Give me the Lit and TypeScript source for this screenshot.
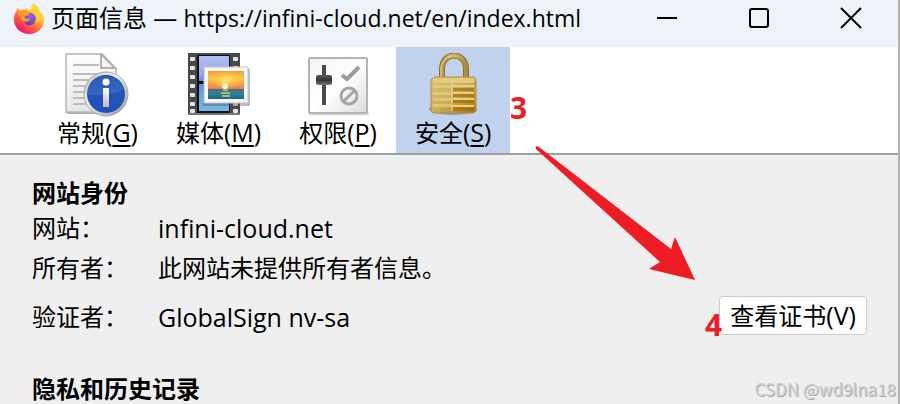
import { LitElement, html, css, svg } from "lit";
import { customElement, state } from "lit/decorators.js";
import { classMap } from "lit/directives/class-map.js";

const firefoxIcon = html`<svg class="logo" viewBox="0 0 32 32" aria-hidden="true">
  <defs>
    <linearGradient id="fx" x1="0.85" y1="0.1" x2="0.25" y2="0.95">
      <stop offset="0" stop-color="#fff04a" /><stop offset="0.35" stop-color="#ffbd2e" />
      <stop offset="0.6" stop-color="#ff7139" /><stop offset="0.85" stop-color="#ff3450" />
      <stop offset="1" stop-color="#e31587" />
    </linearGradient>
    <radialGradient id="globe" cx="0.6" cy="0.25" r="0.8">
      <stop offset="0" stop-color="#a05be8" /><stop offset="0.6" stop-color="#6f52d0" />
      <stop offset="1" stop-color="#5a3cb4" />
    </radialGradient>
  </defs>
  <path fill="url(#fx)" d="M20.500 1c3.500 2.300 4.500 4.500 5 6.600C28.900 10 31 13.600 31 18c0 8.200-6.500 14-15 14S1 25.700 1 17.800C1 14 2 11 3.500 9L4.300 6l3 2.800C9 7.600 10.500 7.300 12 7.400L14 6l1 3 3-1.500C18 4.500 18.700 2.500 20.500 1z" />
  <circle cx="16.500" cy="17" r="6.200" fill="url(#globe)" />
  <path fill="#ff9a2a" d="M4 10c3-2 6-2 8-1l3-2-1 3.600c1.500.4 2.500 1 2.500 1.600-1.500 2-4.200 1-5.200 3.300 1.600 1.500 3.600 1.800 6 .4-.5 3-3.800 4.600-6.600 3.300C7 17 6 13 4 10z" />
  <path fill="#ffd43a" d="M20.500 1c-1.300 4 3.500 6.600 4.300 12.500-1-2.200-3-3.500-5-3.700 4.200 3 5.200 8 2.600 11.600 5-2.400 6.200-8.500 3.400-13.400C24.800 5 23 3 20.500 1z" />
</svg>`;

const generalIcon = html`<svg class="icon" viewBox="0 0 64 64" aria-hidden="true">
  <defs>
    <linearGradient id="paper" x1="0" y1="0" x2="0" y2="1"><stop offset="0" stop-color="#fff" /><stop offset="1" stop-color="#e6e6e6" /></linearGradient>
    <linearGradient id="ring" x1="0" y1="0" x2="1" y2="1"><stop offset="0" stop-color="#b4b8b8" /><stop offset="0.4" stop-color="#f2f2f0" /><stop offset="1" stop-color="#8d9295" /></linearGradient>
    <linearGradient id="blue" x1="0" y1="0" x2="0" y2="1"><stop offset="0" stop-color="#1c4ba6" /><stop offset="0.5" stop-color="#2355b5" /><stop offset="1" stop-color="#1d4fc0" /></linearGradient>
    <linearGradient id="stem" x1="0" y1="0" x2="0" y2="1"><stop offset="0" stop-color="#fff" /><stop offset="1" stop-color="#b9bcc0" /></linearGradient>
  </defs>
  <path d="M1 1h36l14 15v43H1z" fill="url(#paper)" stroke="#c6c6c6" stroke-width="2" />
  <path d="M2 60h48" stroke="#b0b0b0" stroke-width="2" />
  <path d="M36 1v14h14z" fill="#f4f4f4" stroke="#b0b0b0" stroke-width="2" />
  <path d="M8 12h26M8 21h38M8 27h38M8 33h38M8 39h38M8 45h38M8 51h38" stroke="#bcbcbc" stroke-width="2" />
  <circle cx="41" cy="41" r="22" fill="url(#ring)" stroke="#a8acae" stroke-width="1" />
  <circle cx="41" cy="41" r="19" fill="url(#blue)" />
  <path d="M22 42a19 19 0 0 1 37-6Q47 44 22 42z" fill="#5b8bdd" opacity="0.3" />
  <circle cx="41" cy="29" r="3.500" fill="#fff" />
  <path d="M38 35h6v19h-6z" fill="url(#stem)" />
</svg>`;

const holes = [4, 13, 22, 31, 40, 49, 56];
const mediaIcon = html`<svg class="icon" viewBox="0 0 64 64" aria-hidden="true">
  <defs>
    <linearGradient id="frame" x1="0" y1="0" x2="0" y2="1"><stop offset="0" stop-color="#a0b1f0" /><stop offset="0.5" stop-color="#6b8fe2" /><stop offset="1" stop-color="#73b9e8" /></linearGradient>
    <linearGradient id="sky" x1="0" y1="0" x2="0" y2="1"><stop offset="0" stop-color="#f19c42" /><stop offset="0.4" stop-color="#fbc947" /><stop offset="1" stop-color="#f4784e" /></linearGradient>
    <radialGradient id="glow"><stop offset="0" stop-color="#ffe860" /><stop offset="1" stop-color="#ffc83c" stop-opacity="0" /></radialGradient>
    <linearGradient id="sea" x1="0" y1="0" x2="0" y2="1"><stop offset="0" stop-color="#506c80" /><stop offset="0.5" stop-color="#26869b" /><stop offset="1" stop-color="#246184" /></linearGradient>
  </defs>
  <path d="M1 0h52v62H1z" fill="#4a4a4a" />
  <path d="M1 60h52v2H1z" fill="#777" />
  <path d="M10 2h33v58H10z" fill="#111" />
  <path d="M12 3h30v25H12zM12 31h30v27H12z" fill="url(#frame)" />
  <path d="M12 3h30v12Q24 16 12 25z" fill="#fff" opacity="0.18" />
  ${holes.map((y) => svg`<rect x="3" y=${y} width="5" height="4" rx="1" fill="#e4e4e4" /><rect x="46" y=${y} width="5" height="4" rx="1" fill="#e4e4e4" />`)}
  <path d="M16 16h47v37H16z" fill="#555" opacity="0.4" />
  <path d="M17 14h44v36H17z" fill="#f5f5f5" stroke="#c2c2c2" stroke-width="1" />
  <path d="M21 18h36v18H21z" fill="url(#sky)" />
  <path d="M21 36h36v10H21z" fill="url(#sea)" />
  <path d="M21 18h36v18H21z" fill="url(#glow)" />
  <circle cx="38" cy="33" r="3" fill="#fffbe0" />
  <path d="M36 37h5M34 40h9M35 43h8" stroke="#c9c76e" stroke-width="2" opacity="0.8" />
</svg>`;

const permIcon = html`<svg class="icon" viewBox="0 0 64 64" aria-hidden="true">
  <defs>
    <linearGradient id="panel" x1="0" y1="0" x2="1" y2="1"><stop offset="0" stop-color="#f2f2f2" /><stop offset="0.5" stop-color="#fff" /><stop offset="1" stop-color="#dcdcdc" /></linearGradient>
    <linearGradient id="knob" x1="0" y1="0" x2="0" y2="1"><stop offset="0" stop-color="#5a5a5a" /><stop offset="0.5" stop-color="#333" /><stop offset="1" stop-color="#777" /></linearGradient>
  </defs>
  <path d="M3 61h60" stroke="#ddd" stroke-width="3" />
  <rect x="3" y="5" width="58" height="55" rx="1" fill="url(#panel)" stroke="#b4b4b4" stroke-width="2" />
  <path d="M18 12v40" stroke="#4a4a4a" stroke-width="4" />
  <rect x="10" y="22" width="16" height="10" rx="2" fill="url(#knob)" />
  <path d="M36 22l5 4L53 14" fill="none" stroke="#9c9c9c" stroke-width="4" />
  <circle cx="43" cy="43" r="8" fill="none" stroke="#a6a6a6" stroke-width="3" />
  <path d="M37 49l12-12" stroke="#a6a6a6" stroke-width="3" />
</svg>`;

const lockIcon = html`<svg class="icon" viewBox="0 0 64 64" aria-hidden="true">
  <defs>
    <linearGradient id="brass" x1="0" y1="0" x2="1" y2="1"><stop offset="0" stop-color="#d9bf70" /><stop offset="0.5" stop-color="#d1af55" /><stop offset="1" stop-color="#a87812" /></linearGradient>
    <linearGradient id="shackle" x1="0" y1="0" x2="1" y2="0"><stop offset="0" stop-color="#b9944a" /><stop offset="0.5" stop-color="#d8bb6a" /><stop offset="1" stop-color="#b08a3c" /></linearGradient>
  </defs>
  <ellipse cx="32" cy="56" rx="24" ry="6" fill="#536489" opacity="0.5" />
  <path d="M21 27V16C21-2 45-2 45 16v11" fill="none" stroke="#8c6c2c" stroke-width="6" />
  <path d="M21 27V16C21-2 45-2 45 16v11" fill="none" stroke="url(#shackle)" stroke-width="4" />
  <path d="M20 26V15C21 8 25 4 30 3" fill="none" stroke="#f1dda0" stroke-width="1" />
  <path d="M13 24h40l2 3v31l-2 2H12l-2-2V27z" fill="url(#brass)" stroke="#b3923f" stroke-width="1" />
  <path d="M12 25h41v5H12z" fill="#e3cc80" />
  <path d="M12 32h19v3H12zM12 39h19v3H12zM12 45h19v3H12zM12 51h19v3H12z" fill="#eddb9e" opacity="0.5" />
  <path d="M32 35h21v3H32zM32 41h21v3H32zM32 47h21v3H32zM32 54h21v4H32z" fill="#906009" opacity="0.55" />
  <path d="M32 32h21v2H32zM32 39h21v2H32zM32 45h21v2H32zM32 52h21v2H32z" fill="#ebcf80" />
  <path d="M31 30v28" stroke="#ecdba4" stroke-width="1" />
</svg>`;

const tabs = [
  { name: "常规", key: "G", icon: generalIcon },
  { name: "媒体", key: "M", icon: mediaIcon },
  { name: "权限", key: "P", icon: permIcon },
  { name: "安全", key: "S", icon: lockIcon },
];

@customElement("app-root")
export class AppRoot extends LitElement {
  @state() private selected = 3;

  static styles = css`
    :host {
      display: block;
      position: relative;
      min-height: 100vh;
      box-sizing: border-box;
      overflow: hidden;
      border-right: 2px solid #b3b3b3;
      background: #efefef;
      color: #000;
      font: 24px/32px "Open Sans", "Noto Sans CJK SC", sans-serif;
    }
    button {
      font: inherit;
      color: inherit;
      border: 0;
      padding: 0;
      background: none;
    }
    .titlebar {
      display: flex;
      align-items: center;
      height: 47px;
      padding: 0 36px 12px 13px;
      box-sizing: border-box;
      background: #eef3fa;
    }
    .logo { width: 32px; height: 32px; flex: none; margin-right: 6px; }
    .title { flex: 1; margin: 0; font-size: 24px; font-weight: 400; white-space: nowrap; }
    .url { font-size: 23px; }
    .latin { font-size: 25px; }
    .controls { display: flex; gap: 70px; }
    .controls button { display: flex; }
    .controls svg { width: 22px; height: 22px; fill: none; stroke: #000; stroke-width: 2; }
    .tabs {
      display: flex;
      padding-left: 38px;
      background: #fff;
      border-bottom: 2px solid #a0a0a0;
    }
    .tab {
      display: flex;
      flex-direction: column;
      align-items: center;
      min-width: 114px;
      height: 106px;
      padding: 6px 19px 0;
    }
    .tab.active { background: #c1d2ee; }
    .icon { width: 64px; height: 64px; display: block; }
    .name { white-space: nowrap; line-height: 30px; }
    .name u { text-decoration-thickness: 2px; text-underline-offset: 3px; }
    .page { padding: 24px 31px 0 32px; }
    h2 { margin: 0; font-size: 24px; line-height: 28px; font-weight: 700; }
    .facts {
      display: grid;
      grid-template-columns: 126px 1fr auto;
      grid-template-rows: 40px 40px 58px;
      align-items: center;
      margin: 1px 0 29px;
    }
    dt { grid-column: 1; }
    dd { margin: 0; grid-column: 2; white-space: nowrap; }
    .view {
      grid-column: 3;
      grid-row: 3;
      height: 39px;
      padding: 0 10px;
      border: 1px solid #ccc;
      border-radius: 4px;
      background: #fdfdfd;
      margin-bottom: 4px;
    }
    .overlay { position: absolute; pointer-events: none; }
    .arrow { left: 530px; top: 140px; width: 170px; height: 145px; }
    .mark { color: #ee1c24; font: 700 30px/32px "Noto Sans", sans-serif; }
    .three { left: 510px; top: 92px; }
    .four { left: 705px; top: 309px; }
    .watermark {
      right: 2px;
      bottom: 3px;
      color: #d0d0d0;
      font: 17px/24px "Noto Sans CJK SC", sans-serif;
      text-shadow: 1px 1px 0 #aaa;
      white-space: nowrap;
    }
  `;

  render() {
    return html`
      <header class="titlebar">
        ${firefoxIcon}
        <h1 class="title">页面信息 — <span class="url">https://infini-cloud.net/en/index.html</span></h1>
        <div class="controls">
          <button aria-label="最小化"><svg viewBox="0 0 22 22"><path d="M1 11h20" /></svg></button>
          <button aria-label="最大化"><svg viewBox="0 0 22 22"><rect x="2" y="2" width="18" height="18" rx="2" /></svg></button>
          <button aria-label="关闭"><svg viewBox="0 0 22 22"><path d="M1 1l20 20M21 1L1 21" /></svg></button>
        </div>
      </header>
      <nav class="tabs" role="tablist">
        ${tabs.map((t, i) => html`
          <button role="tab" aria-selected=${i === this.selected}
            class=${classMap({ tab: true, active: i === this.selected })}
            @click=${() => (this.selected = i)}>
            ${t.icon}<span class="name">${t.name}<span class="latin">(<u>${t.key}</u>)</span></span>
          </button>`)}
      </nav>
      <main class="page">
        <h2>网站身份</h2>
        <dl class="facts">
          <dt>网站：</dt><dd class="latin">infini-cloud.net</dd>
          <dt>所有者：</dt><dd>此网站未提供所有者信息。</dd>
          <dt>验证者：</dt><dd class="latin">GlobalSign nv-sa</dd>
          <button class="view">查看证书<span class="latin">(V)</span></button>
        </dl>
        <h2>隐私和历史记录</h2>
      </main>
      <svg class="overlay arrow" viewBox="530 140 170 145" aria-hidden="true">
        <path fill="#ee1c24" d="M537 146q-2 1-1 3L660 262l-11 7 46 11-20-43-4 12L539 147z" />
      </svg>
      <span class="overlay mark three">3</span>
      <span class="overlay mark four">4</span>
      <span class="overlay watermark">CSDN @wd9lna18</span>
    `;
  }
}
